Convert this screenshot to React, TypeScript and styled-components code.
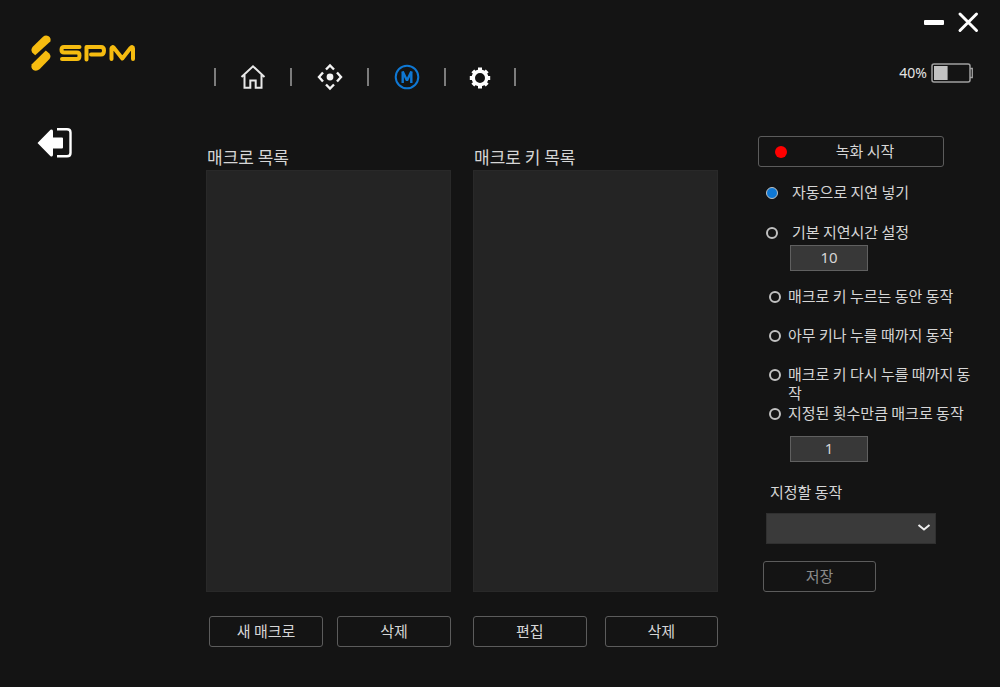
import React, { useState } from "react";
import styled, { createGlobalStyle, css } from "styled-components";

const GlobalStyle = createGlobalStyle`
  *, *::before, *::after { box-sizing: border-box; }
  body {
    margin: 0;
    background: #141414;
    color: #d6d6d6;
    font-family: "Noto Sans CJK KR", sans-serif;
    font-size: 15px;
    line-height: 20px;
  }
  button, input, select { font: inherit; color: inherit; margin: 0; }
`;

const Page = styled.div`
  display: flex;
  flex-direction: column;
  min-height: 100vh;
`;

const Header = styled.header`
  display: flex;
  height: 104px;
  flex: none;
`;

const Brand = styled.a`
  width: 214px;
  flex: none;
  padding: 34px 0 0 30px;
`;

const Nav = styled.nav`
  display: flex;
  align-items: center;
  height: 26px;
  margin-top: 64px;
`;

const Divider = styled.span`
  width: 2px;
  height: 18px;
  background: #7c7c7c;
`;

const IconButton = styled.button<{ $width: number; $height: number }>`
  display: flex;
  align-items: center;
  justify-content: center;
  width: ${(p) => p.$width}px;
  height: ${(p) => p.$height}px;
  padding: 0;
  border: 0;
  background: none;
  cursor: pointer;
`;

const Status = styled.div`
  display: flex;
  flex-direction: column;
  align-items: flex-end;
  margin-left: auto;
  padding: 8px 18px 0 0;
`;

const WindowControls = styled.div`
  display: flex;
  gap: 6px;
`;

const Battery = styled.div`
  display: flex;
  align-items: center;
  gap: 4px;
  margin-top: 27px;
  padding-right: 9px;
  font-family: "Noto Sans", sans-serif;
  font-size: 14px;
  color: #e4e4e4;
`;

const Body = styled.main`
  display: grid;
  flex: 1;
  grid-template-columns: 184px minmax(0, 1fr) minmax(0, 1fr) 260px;
  column-gap: 22px;
  padding-bottom: 40px;
`;

const Side = styled.aside`
  padding: 22px 0 0 36px;
`;

const Column = styled.section`
  display: flex;
  flex-direction: column;
  padding-top: 41px;
`;

const ColumnTitle = styled.h2`
  margin: 0 0 1px;
  padding-left: 1px;
  font-size: 17px;
  font-weight: 400;
  line-height: 24px;
`;

const ListBox = styled.div`
  flex: 1;
  min-height: 240px;
  background: #242424;
  border: 1px solid #292929;
`;

const Actions = styled.div<{ $inset?: number }>`
  display: grid;
  grid-template-columns: 1fr 1fr;
  gap: ${(p) => (p.$inset ? 14 : 18)}px;
  margin-top: 24px;
  padding-left: ${(p) => p.$inset ?? 0}px;
`;

const outline = css`
  height: 31px;
  padding: 0 0 2px;
  border: 1px solid #5c5c5c;
  border-radius: 3px;
  background: transparent;
  cursor: pointer;
`;

const Button = styled.button`
  ${outline}
  &:disabled { color: #8a8a8a; cursor: default; }
`;

const Settings = styled.section`
  display: flex;
  flex-direction: column;
  align-items: flex-start;
  padding: 32px 24px 0 18px;
`;

const RecordButton = styled.button`
  ${outline}
  display: flex;
  align-items: center;
  width: 186px;
  padding: 0 0 2px 16px;
`;

const RecordDot = styled.span`
  width: 12px;
  height: 12px;
  margin-top: 2px;
  border-radius: 50%;
  background: #ff0000;
`;

const RecordLabel = styled.span`
  flex: 1;
  text-align: center;
`;

const Options = styled.fieldset<{ $kind: "delay" | "run" }>`
  display: flex;
  flex-direction: column;
  min-width: 0;
  margin: ${(p) => (p.$kind === "delay" ? "15px 0 0 8px" : "15px -8px 0 11px")};
  padding: 0;
  border: 0;
  gap: ${(p) => (p.$kind === "delay" ? 20 : 0)}px;
`;

const Option = styled.label<{ $gap: number; $rowHeight?: number }>`
  display: flex;
  align-items: flex-start;
  gap: ${(p) => p.$gap}px;
  min-height: ${(p) => p.$rowHeight ?? 20}px;
  line-height: 19px;
  cursor: pointer;
`;

const Radio = styled.input`
  appearance: none;
  flex: none;
  width: 12px;
  height: 12px;
  margin: 5px 0 0;
  border: 2px solid #c0c0c0;
  border-radius: 50%;
  &:checked { background: #0f78d4; border-width: 1px; }
`;

const NumberBox = styled.input`
  width: 78px;
  height: 26px;
  padding: 0 0 2px;
  border: 1px solid #606060;
  background: #383838;
  font-family: "Noto Sans", sans-serif;
  text-align: center;
`;

const Indent = styled.div<{ $top: number }>`
  display: flex;
  margin: ${(p) => p.$top}px 0 0 32px;
`;

const SelectLabel = styled.label`
  margin: 20px 0 0 12px;
`;

const SelectWrap = styled.div`
  position: relative;
  width: 170px;
  margin: 11px 0 17px 8px;
  svg { position: absolute; right: 5px; top: 10px; pointer-events: none; }
`;

const Select = styled.select`
  appearance: none;
  display: block;
  width: 100%;
  height: 31px;
  padding: 0 24px 0 8px;
  border: 1px solid #303030;
  border-radius: 0;
  background: #3a3a3a;
`;

const SaveButton = styled(Button)`
  width: 113px;
  margin-left: 5px;
`;

const Logo = () => (
  <svg width="108" height="38" viewBox="0 0 108 38" fill="none" aria-hidden="true" display="block">
    <g fill="#f6bc10">
      <path d="M5.2 21.300 2.2 18.500Q0.300 15.500 3 12.500L13 2.800Q15.300 0.800 18.200 2Q21.600 4 20.300 7.600Z" />
      <path d="M15.800 16.400 19.300 19.500Q21.600 22.300 19.500 24.900L9.500 35.200Q6.500 37.700 3.200 36Q0.500 34 1.800 30.300Z" />
    </g>
    <g stroke="#f6bc10" strokeWidth="4" strokeLinecap="round" strokeLinejoin="round">
      <path d="M49.500 13H34Q31.500 13 31.500 15.700Q31.500 18.500 34 18.500H47Q49.500 18.500 49.500 21.500Q49.500 25 47 25H32" />
      <path d="M56.500 25.500V13H71Q74 13 74 16.500Q74 20.500 71 20.500H61" />
      <path d="M81.500 25V14.500Q82 12 84 14L92.300 24.500 100.500 14Q103 12 103 14.500V25" />
    </g>
  </svg>
);

const HomeIcon = () => (
  <svg width="26" height="26" viewBox="0 0 26 26" fill="none" stroke="#e8e8e8" strokeWidth="2" aria-hidden="true">
    <path d="M1.500 13 13 2.300 24.500 13M4.500 11V23.800H10.300V16.500H15.700V23.800H21.500V11" />
  </svg>
);

const MoveIcon = () => (
  <svg width="26" height="28" viewBox="0 0 26 28" fill="none" stroke="#f4f4f4" strokeWidth="2.400" aria-hidden="true">
    <circle cx="13" cy="14" r="3.400" fill="#f4f4f4" stroke="none" />
    <path d="M9 6.500 13 2.500 17 6.500M9 21.500 13 25.500 17 21.500M6 9.500 2 14 6 18.500M20 9.500 24 14 20 18.500" />
  </svg>
);

const MacroIcon = () => (
  <svg width="26" height="28" viewBox="0 0 26 28" fill="none" stroke="#0f78d4" aria-hidden="true">
    <circle cx="13" cy="14" r="11.300" strokeWidth="2" />
    <path d="M8.700 20V8.500M17.300 20V8.500" strokeWidth="2.400" />
    <path d="M8.700 8.500 13 17.500 17.300 8.500" strokeWidth="2.400" strokeLinejoin="bevel" />
  </svg>
);

const GearIcon = () => (
  <svg width="22" height="24" viewBox="0 0 22 24" fill="none" stroke="#fff" aria-hidden="true">
    <circle cx="11" cy="13" r="6.700" strokeWidth="3.400" />
    <path d="M11 2.500V6M11 20V23.500M.8 13H4M18 13H21.200M3.800 5.800 6 8M16 18 18.200 20.200M18.200 5.800 16 8M6 18 3.800 20.200" strokeWidth="4" />
  </svg>
);

const ExitIcon = () => (
  <svg width="38" height="34" viewBox="0 0 38 34" aria-hidden="true">
    <path d="M1.500 17 14.500 3.800Q17 2.500 17 5.500V11.500H26Q27 11.500 27 12.500V21.500Q27 22.500 26 22.500H17V28.500Q17 31.500 14.500 30.200Z" fill="#fff" />
    <path d="M21 3.300H31Q34.500 3.300 34.500 6.500V27Q34.500 30.300 31 30.300H21" fill="none" stroke="#fff" strokeWidth="2.400" />
  </svg>
);

const MinimizeIcon = () => (
  <svg width="28" height="28" viewBox="0 0 28 28" aria-hidden="true">
    <rect x="4" y="12" width="20" height="5" rx="1" fill="#fff" />
  </svg>
);

const CloseIcon = () => (
  <svg width="28" height="28" viewBox="0 0 28 28" aria-hidden="true">
    <path d="M6 6 22.500 22.500M22.500 6 6 22.500" stroke="#fff" strokeWidth="3" strokeLinecap="round" />
  </svg>
);

const BatteryIcon = ({ level }: { level: number }) => (
  <svg width="42" height="20" viewBox="0 0 42 20" fill="none" aria-hidden="true">
    <rect x="1" y="1" width="38" height="18" rx="2" stroke="#a0a0a0" strokeWidth="1.500" />
    <path d="M39 5.500H41.300V14.500H39" stroke="#a0a0a0" strokeWidth="1.300" />
    <rect x="3" y="3" width={(34 * level) / 100} height="14" fill="#c2c2c2" />
  </svg>
);

const ChevronIcon = () => (
  <svg width="14" height="10" viewBox="0 0 14 10" fill="none" aria-hidden="true">
    <path d="M1.500 2 7 6.500 12.500 2" stroke="#f0f0f0" strokeWidth="2" />
  </svg>
);

const tabs = [
  { label: "홈", width: 74, Icon: HomeIcon },
  { label: "키 설정", width: 75, Icon: MoveIcon },
  { label: "매크로", width: 75, Icon: MacroIcon },
  { label: "설정", width: 68, Icon: GearIcon },
];

const runModes = [
  { text: "매크로 키 누르는 동안 동작", height: 39 },
  { text: "아무 키나 누를 때까지 동작", height: 39 },
  { text: "매크로 키 다시 누를 때까지 동작", height: 39 },
  { text: "지정된 횟수만큼 매크로 동작", height: 20 },
];

export default function App() {
  const [delay, setDelay] = useState("auto");
  const [mode, setMode] = useState<number | null>(null);
  const [delayValue, setDelayValue] = useState("10");
  const [repeat, setRepeat] = useState("1");

  return (
    <>
      <GlobalStyle />
      <Page>
        <Header>
          <Brand href="#" aria-label="SPM"><Logo /></Brand>
          <Nav>
            <Divider />
            {tabs.map(({ label, width, Icon }) => (
              <React.Fragment key={label}>
                <IconButton $width={width} $height={28} aria-label={label}><Icon /></IconButton>
                <Divider />
              </React.Fragment>
            ))}
          </Nav>
          <Status>
            <WindowControls>
              <IconButton $width={28} $height={28} aria-label="최소화"><MinimizeIcon /></IconButton>
              <IconButton $width={28} $height={28} aria-label="닫기"><CloseIcon /></IconButton>
            </WindowControls>
            <Battery><span>40%</span><BatteryIcon level={40} /></Battery>
          </Status>
        </Header>
        <Body>
          <Side>
            <IconButton $width={38} $height={34} aria-label="나가기"><ExitIcon /></IconButton>
          </Side>
          <Column>
            <ColumnTitle>매크로 목록</ColumnTitle>
            <ListBox />
            <Actions $inset={3}>
              <Button>새 매크로</Button>
              <Button>삭제</Button>
            </Actions>
          </Column>
          <Column>
            <ColumnTitle>매크로 키 목록</ColumnTitle>
            <ListBox />
            <Actions>
              <Button>편집</Button>
              <Button>삭제</Button>
            </Actions>
          </Column>
          <Settings>
            <RecordButton><RecordDot /><RecordLabel>녹화 시작</RecordLabel></RecordButton>
            <Options $kind="delay" aria-label="지연">
              <Option $gap={14}>
                <Radio type="radio" name="delay" checked={delay === "auto"} onChange={() => setDelay("auto")} />
                자동으로 지연 넣기
              </Option>
              <Option $gap={14}>
                <Radio type="radio" name="delay" checked={delay === "fixed"} onChange={() => setDelay("fixed")} />
                기본 지연시간 설정
              </Option>
            </Options>
            <Indent $top={3}>
              <NumberBox aria-label="기본 지연시간" value={delayValue} onChange={(e) => setDelayValue(e.target.value)} />
            </Indent>
            <Options $kind="run" aria-label="동작 방식">
              {runModes.map(({ text, height }, i) => (
                <Option key={text} $gap={7} $rowHeight={height}>
                  <Radio type="radio" name="mode" checked={mode === i} onChange={() => setMode(i)} />
                  {text}
                </Option>
              ))}
            </Options>
            <Indent $top={13}>
              <NumberBox aria-label="반복 횟수" value={repeat} onChange={(e) => setRepeat(e.target.value)} />
            </Indent>
            <SelectLabel htmlFor="action">지정할 동작</SelectLabel>
            <SelectWrap>
              <Select id="action" defaultValue=""><option value="" /></Select>
              <ChevronIcon />
            </SelectWrap>
            <SaveButton disabled>저장</SaveButton>
          </Settings>
        </Body>
      </Page>
    </>
  );
}
